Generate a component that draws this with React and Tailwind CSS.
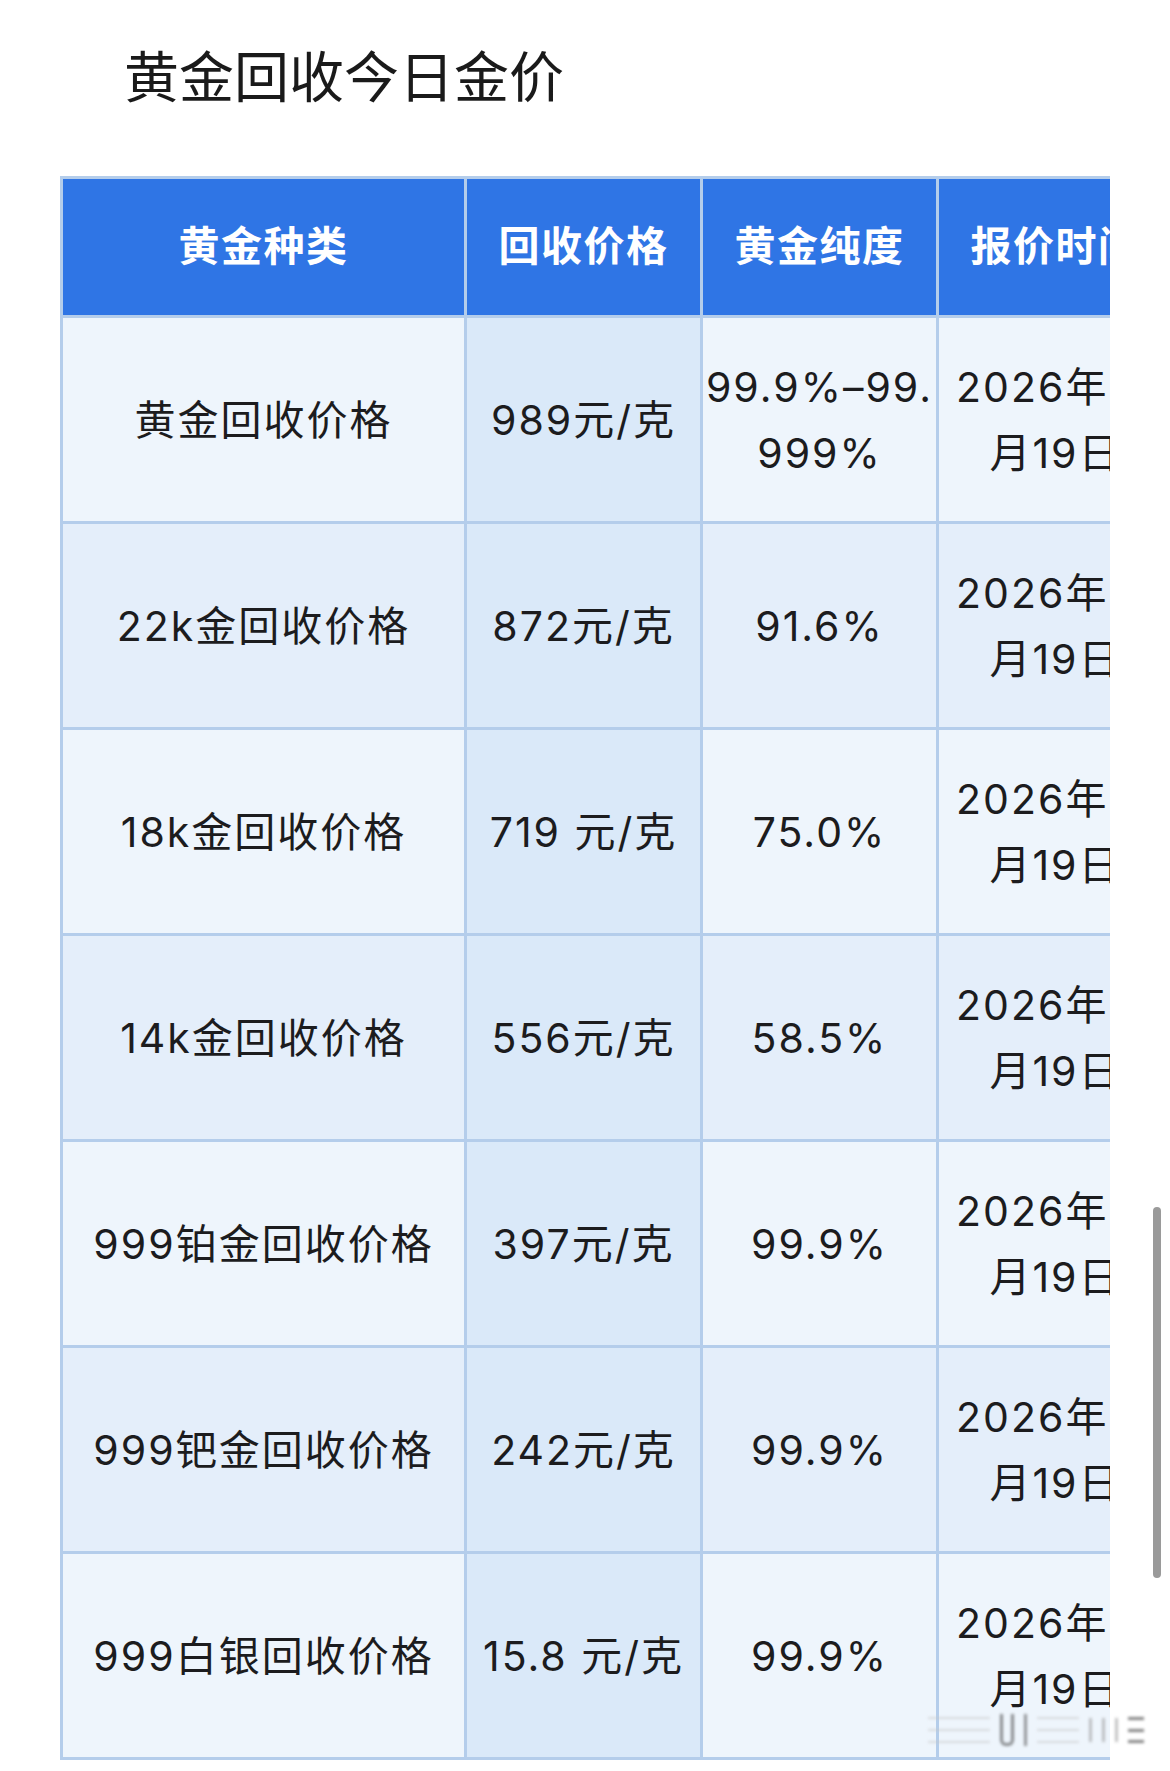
import React from "react";

const rows = [
  { name: "黄金回收价格", price: "989元/克", purity: ["99.9%–99.", "999%"] },
  { name: "22k金回收价格", price: "872元/克", purity: ["91.6%"] },
  { name: "18k金回收价格", price: "719 元/克", purity: ["75.0%"] },
  { name: "14k金回收价格", price: "556元/克", purity: ["58.5%"] },
  { name: "999铂金回收价格", price: "397元/克", purity: ["99.9%"] },
  { name: "999钯金回收价格", price: "242元/克", purity: ["99.9%"] },
  { name: "999白银回收价格", price: "15.8 元/克", purity: ["99.9%"] },
];

function Lines({ lines }) {
  return (
    <span>
      {lines.map((l, i) => (
        <React.Fragment key={i}>
          {i > 0 && <br />}
          {l}
        </React.Fragment>
      ))}
    </span>
  );
}

const cell =
  "flex h-[203px] items-center justify-center text-center text-[41px] leading-[66px] tracking-[2px]";

export default function App() {
  return (
    <div className="relative w-[1170px] h-[1771px] overflow-hidden bg-white font-['Inter','Noto_Sans_CJK_SC',sans-serif] text-[#1c1c1e]">
      <h1 className="pt-[46px] pl-[124px] text-[55px] leading-[54px] font-normal text-[#1a1a1a] font-['Noto_Sans_CJK_SC',sans-serif]">
        黄金回收今日金价
      </h1>

      <div className="mt-[76px] ml-[60px] w-[1050px] overflow-hidden">
        <div className="grid w-max grid-cols-[401px_233px_233px_233px] gap-[3px] bg-[#b4cdeb] p-[3px]">
          {["黄金种类", "回收价格", "黄金纯度", "报价时间"].map((h) => (
            <div
              key={h}
              className="flex h-[136px] items-center justify-center bg-[#2f75e5] text-[41px] font-bold tracking-[1.5px] text-white"
            >
              {h}
            </div>
          ))}
          {rows.map((r, i) => {
            const bg = i % 2 === 0 ? "bg-[#eef5fc]" : "bg-[#e4eefa]";
            return (
              <React.Fragment key={r.name}>
                <div className={`${cell} ${bg}`}>{r.name}</div>
                <div className={`${cell} bg-[#dae9f9]`}>{r.price}</div>
                <div className={`${cell} ${bg}`}>
                  <Lines lines={r.purity} />
                </div>
                <div className={`${cell} ${bg}`}>
                  <Lines lines={["2026年01", "月19日"]} />
                </div>
              </React.Fragment>
            );
          })}
        </div>
      </div>

      {/* scrollbar indicator (overlay) */}
      <div className="absolute left-[1153px] top-[1207px] h-[371px] w-[8px] rounded-full bg-[#9a9a9a]" />

      {/* blurred watermark (overlay) */}
      <div className="absolute left-[928px] top-[1714px] flex h-[32px] w-[216px] items-stretch gap-[10px] opacity-60 blur-[1.5px]">
        <div className="flex w-[62px] flex-col justify-between py-[3px]">
          <div className="h-[2px] bg-[#c8c8c8]" />
          <div className="h-[2px] bg-[#c8c8c8]" />
          <div className="h-[2px] bg-[#c8c8c8]" />
        </div>
        <div className="w-[14px] rounded-b-[6px] border-x-[3px] border-b-[3px] border-[#444]" />
        <div className="w-[3px] bg-[#555]" />
        <div className="flex flex-1 flex-col justify-between py-[3px]">
          <div className="h-[2px] bg-[#c8c8c8]" />
          <div className="h-[2px] bg-[#c8c8c8]" />
          <div className="h-[2px] bg-[#c8c8c8]" />
        </div>
        <div className="flex gap-[10px] py-[4px]">
          <div className="w-[3px] bg-[#999]" />
          <div className="w-[3px] bg-[#999]" />
          <div className="w-[3px] bg-[#999]" />
        </div>
        <div className="flex w-[16px] flex-col justify-between py-[3px]">
          <div className="h-[3px] bg-[#333]" />
          <div className="h-[3px] bg-[#333]" />
          <div className="h-[3px] bg-[#333]" />
        </div>
      </div>
    </div>
  );
}
